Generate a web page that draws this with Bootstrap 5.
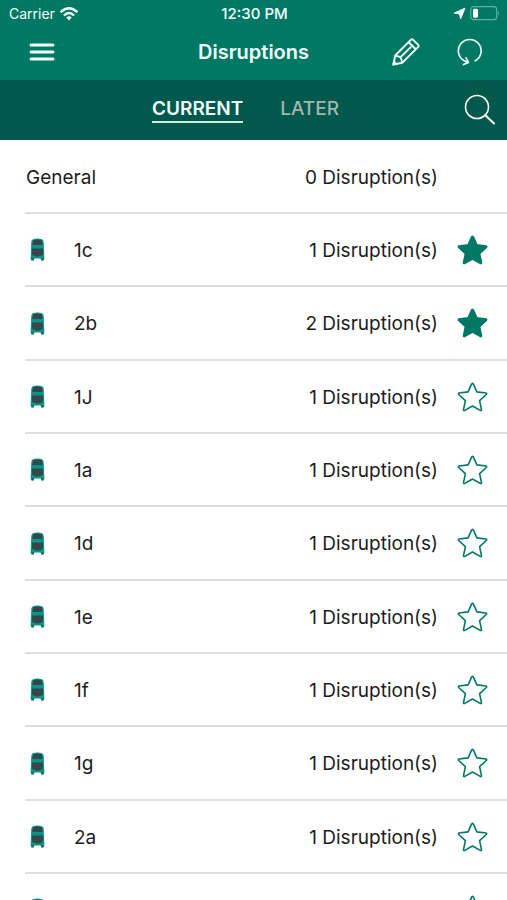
<!DOCTYPE html>
<html lang="en">
<head>
<meta charset="utf-8">
<meta name="viewport" content="width=device-width, initial-scale=1">
<title>Disruptions</title>
<link href="https://cdn.jsdelivr.net/npm/bootstrap@5.3.0/dist/css/bootstrap.min.css" rel="stylesheet">
<style>
  body { font-family: Inter, "Liberation Sans", sans-serif; color: #1c1c1c; background: #fff; }
  .top-area { background: #007864; color: #f2fffc; }
  .status-bar { height: 27px; font-size: 14px; line-height: 27px; padding: 0 7px 0 9px; }
  .clock { font-size: 15px; font-weight: 500; }
  .side { flex: 1 1 0; }
  .title-bar { height: 53px; padding: 0 24px 4px; }
  .title-bar h1 { font-size: 20px; line-height: 28px; font-weight: 600; }
  .tab-bar { height: 60px; background: #00594c; padding: 0 11px; }
  .icon-btn { background: none; border: 0; padding: 0; color: inherit; display: inline-flex; }
  .title-tools { gap: 37px; }
  .tab-btn { background: none; border: 0; padding: 0; font-size: 19px; line-height: 24px; font-weight: 500; color: #a3b5b1; border-bottom: 2px solid transparent; }
  .tab-btn.active { color: #f2fffc; border-color: #d0ebe5; font-weight: 600; }
  .tabs { gap: 37px; margin-right: 16px; }
  .routes { overflow-y: auto; scrollbar-width: none; min-height: 0; padding-top: 1px; }
  .routes::-webkit-scrollbar { display: none; }
  .route { height: 73px; margin-left: 25px; padding: 2px 19px 0 1px; border-bottom: 2px solid #dfdfdf; font-size: 19px; line-height: 26px; }
  .route:nth-child(3n) { height: 74px; }
  .bus { width: 23px; margin-right: 25px; padding-bottom: 2px; }
  .star-slot { width: 31px; margin-left: 19px; padding-bottom: 2px; color: #007864; }
  .star { fill: none; stroke: currentColor; stroke-width: 1.6; stroke-linejoin: round; }
  .star-on .star { fill: currentColor; }
</style>
</head>
<body>
<svg class="d-none" aria-hidden="true">
  <symbol id="bus" viewBox="0 0 15 23">
    <path d="M3 1.200Q7.500-.2 12 1.200Q13.500 1.700 13.700 4L14.300 18.500Q14.600 21.500 13.600 22.300H11.600L10.500 20.500H4.500L3.400 22.300H1.400Q.4 21.500.7 18.500L1.300 4Q1.500 1.700 3 1.200Z" fill="#079584"/>
    <path d="M3.200 2.300Q7.500.8 11.800 2.300L12.700 7H2.300Z" fill="#36474b"/>
    <path d="M2 10.400H13V16.500Q11 18.500 7.500 18.500T2 16.500Z" fill="#36474b"/>
    <path d="M1.500 20.300H3.800V22.500H1.500ZM11.200 20.300H13.500V22.500H11.200Z" fill="#285e5c"/>
  </symbol>
  <symbol id="star" viewBox="0 0 31 30">
    <path d="M14.700 1.900Q15.500.9 16.300 1.900L19.900 9.900L29 11Q30.200 11.500 29.300 12.500L22.600 18.600L24.500 27.600Q24.400 28.900 23.200 28.400L15.500 24L7.800 28.400Q6.600 28.900 6.500 27.600L8.400 18.600L1.700 12.500Q.8 11.500 2 11L11.100 9.900Z"/>
  </symbol>
</svg>
<div class="vh-100 d-flex flex-column overflow-hidden">
  <header class="top-area flex-shrink-0">
    <div class="status-bar d-flex align-items-center">
      <div class="side d-flex align-items-center">
        <span>Carrier</span>
        <svg class="ms-1" width="20" height="16" viewBox="0 0 20 16" fill="none" stroke="currentColor" stroke-width="2.400" aria-hidden="true"><path d="M1.600 6.200Q10-1.600 18.400 6.200M4.900 9.500Q10 4.700 15.100 9.500"/><path d="M7.200 11.500Q10 9.200 12.800 11.500L10 14.400Z" fill="currentColor" stroke="none"/></svg>
      </div>
      <span class="clock">12:30 PM</span>
      <div class="side d-flex align-items-center justify-content-end">
        <svg width="13" height="13" viewBox="0 0 13 13" fill="currentColor" aria-hidden="true"><path d="M12 1.200L7.600 11.800L6.500 6.900L1.200 6.100Z" stroke="currentColor" stroke-linejoin="round"/></svg>
        <svg class="ms-1" width="30" height="15" viewBox="0 0 30 15" aria-hidden="true"><rect x=".7" y=".7" width="26" height="13" rx="3" fill="none" stroke="#5fb0a2" stroke-width="1.200"/><rect x="3" y="2.700" width="5" height="9" rx="1.500" fill="#fff"/><path d="M28 5Q30 7.200 28 9.500Z" fill="#5fb0a2"/></svg>
      </div>
    </div>
    <div class="title-bar d-flex align-items-center">
      <div class="side d-flex">
        <button class="icon-btn ms-1" type="button" aria-label="Menu"><svg width="28" height="20" viewBox="0 0 28 20" stroke="currentColor" stroke-width="3" stroke-linecap="round"><path d="M3 3H25M3 10H25M3 17H25"/></svg></button>
      </div>
      <h1 class="m-0">Disruptions</h1>
      <div class="side title-tools d-flex align-items-center justify-content-end">
        <button class="icon-btn" type="button" aria-label="Edit"><svg width="28" height="28" viewBox="0 0 28 28" fill="none" stroke="currentColor" stroke-width="1.900" stroke-linejoin="round" stroke-linecap="round"><path d="M1.400 26.500L3.200 17.500L18.800 1.900Q20 .8 21.200 1.900L26 6.700Q27.100 7.900 26 9.100L10.400 24.700ZM16.600 4.200L23.800 11.300M3.200 17.500L8.600 19.200L10.400 24.700M8.600 19.200L18.500 9.300"/><path d="M1.400 26.500L2 23.600L4.300 25.900Z" fill="currentColor"/></svg></button>
        <button class="icon-btn" type="button" aria-label="Refresh"><svg width="26" height="28" viewBox="0 0 26 28" fill="none" stroke="currentColor" stroke-width="1.600" stroke-linecap="round" stroke-linejoin="round"><path d="M18.300 22.800A11.400 11.400 0 1 0 7.200 22.800L10.800 24.500M9 19.800L11.500 24.500L6.500 26.600"/></svg></button>
      </div>
    </div>
  </header>
  <nav class="tab-bar d-flex align-items-center flex-shrink-0" aria-label="Time">
    <div class="side"></div>
    <div class="tabs d-flex">
      <button class="tab-btn active" type="button" aria-current="true">CURRENT</button>
      <button class="tab-btn" type="button">LATER</button>
    </div>
    <div class="side d-flex justify-content-end text-white">
      <button class="icon-btn" type="button" aria-label="Search"><svg width="32" height="32" viewBox="0 0 32 32" fill="none" stroke="currentColor" stroke-width="1.600" stroke-linecap="round"><circle cx="13" cy="13" r="11.500"/><path d="M21.300 21.300L30 29.500" stroke-width="2"/></svg></button>
    </div>
  </nav>
  <main class="routes flex-grow-1">
    <ul class="list-unstyled m-0" id="routes"></ul>
  </main>
</div>
<script>
  const rows = [["General", 0], ["1c", 1, true], ["2b", 2, true], ["1J", 1], ["1a", 1], ["1d", 1], ["1e", 1], ["1f", 1], ["1g", 1], ["2a", 1], ["", null]];
  document.getElementById("routes").innerHTML = rows.map(([name, count, starred], i) => `
    <li class="route d-flex align-items-center">
      ${i ? '<span class="bus d-flex justify-content-center"><svg width="15" height="23" aria-hidden="true"><use href="#bus"/></svg></span>' : ""}
      <span class="flex-grow-1">${name}</span>
      <span>${count === null ? "" : count + " Disruption(s)"}</span>
      <span class="star-slot d-flex">${i ? `<button class="icon-btn ${starred ? "star-on" : ""}" type="button" aria-label="Favourite ${name}" aria-pressed="${!!starred}"><svg class="star" width="31" height="30"><use href="#star"/></svg></button>` : ""}</span>
    </li>`).join("");
</script>
<script src="https://cdn.jsdelivr.net/npm/bootstrap@5.3.0/dist/js/bootstrap.bundle.min.js"></script>
</body>
</html>
